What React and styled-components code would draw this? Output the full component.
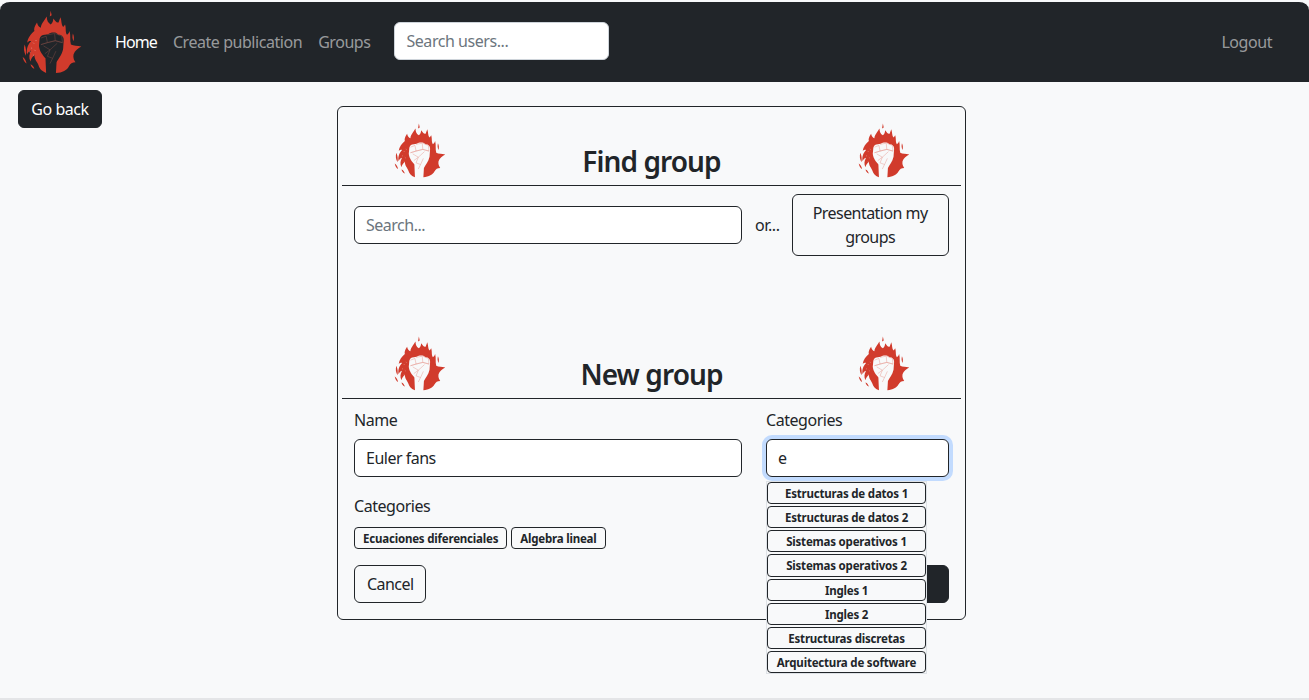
import React from "react";
import styled, { createGlobalStyle } from "styled-components";

const GlobalStyle = createGlobalStyle`
  * { box-sizing: border-box; }
  html, body { margin: 0; height: 100%; overflow: hidden; }
  body {
    background: #e4e5e7;
    color: #212529;
    font-family: "Noto Sans", "Open Sans", sans-serif;
    font-size: 16px;
    line-height: 24px;
  }
`;

const FLAMES =
  "M108 205C96 200 88 194 84 180C80 170 72 164 72 150C66 156 62 160 60 170C54 158 56 146 62 136C56 138 52 142 50 148C46 134 52 118 62 108C58 106 54 108 50 112C52 96 62 84 72 76C70 70 72 62 80 50C82 60 86 64 92 66C92 56 100 48 110 32C110 44 114 52 122 56C128 52 130 44 130 38C136 46 140 52 146 50C148 44 150 40 152 34C156 46 154 56 160 64C162 62 164 60 166 56C170 70 166 78 172 88C176 84 178 82 180 76C184 92 180 104 184 118C192 122 204 122 216 124C206 130 196 136 192 148C190 158 194 166 198 172C188 172 182 176 178 184C172 196 158 204 138 205L140 172C146 160 156 150 160 132L162 104C162 94 156 88 146 88L138 82C128 80 120 82 114 86L104 88C96 88 90 92 88 100L86 122C88 140 98 150 106 160Z" +
  "M122 14L125 28L119 32ZM42 118C38 130 40 142 46 152C48 140 46 128 42 118ZM36 156C42 160 46 166 48 176C42 172 38 166 36 156ZM60 178C66 180 70 186 72 192C66 190 62 186 60 178ZM190 84C194 92 194 100 192 108C188 100 188 92 190 84Z";

function FistLogo({ width, height, lines }) {
  return (
    <svg width={width} height={height} viewBox="34 12 184 196">
      <path d={FLAMES} fill="#d13b2c" />
      <path
        d="M92 98L108 92L112 112L92 118M112 88L134 84L136 106L112 112M136 84L156 92L158 112L136 106M92 118L112 112L136 106L158 112M100 122L120 134L142 114M120 134L112 154L128 160L138 138M104 146L120 134M128 160L120 176"
        fill="none"
        stroke={lines}
        strokeWidth="2"
        opacity="0.75"
      />
      <path
        d="M62 128l3 2M68 112l3 3M56 140l4 1M72 134l3 3M68 150l3 1M76 104l2 3"
        fill="none"
        stroke="#e8a49b"
        strokeWidth="2"
      />
    </svg>
  );
}

const Page = styled.div`
  width: 1309px;
  height: 698px;
  background: #f8f9fa;
  overflow: hidden;
`;

const Navbar = styled.nav`
  height: 82px;
  background: #212529;
  display: flex;
  align-items: center;
  padding: 0 37px 0 22px;
  border-top: 2px solid #f8f9fa;
  border-radius: 10px 10px 0 0;
`;

const NavLinks = styled.div`
  display: flex;
  align-items: center;
  margin-left: 33px;
  gap: 16px;
`;

const NavLink = styled.a`
  color: ${(p) => (p.$active ? "#fff" : "rgba(255,255,255,.55)")};
  letter-spacing: ${(p) => (p.$active ? "-0.9px" : "-0.45px")};
`;

const NavSearch = styled.input`
  width: 215px;
  height: 38px;
  margin: 0 0 2px 8px;
  padding: 6px 12px 6px 11px;
  border: 1px solid #ced4da;
  border-radius: 6px;
  background: #fff;
  font: inherit;
  letter-spacing: -0.45px;
  &::placeholder { color: #6c757d; opacity: 1; }
`;

const Logout = styled(NavLink)`
  margin-left: auto;
`;

const Content = styled.div`
  display: flex;
  align-items: flex-start;
  padding: 8px 0 0 18px;
`;

const BackButton = styled.button`
  height: 38px;
  width: 84px;
  border: 1px solid #212529;
  border-radius: 6px;
  background: #212529;
  color: #fff;
  font: inherit;
  letter-spacing: -0.45px;
  padding: 0;
`;

const Card = styled.main`
  width: 629px;
  height: 514px;
  margin: 16px 0 0 235px;
  padding: 0 4px;
  border: 1px solid #212529;
  border-radius: 6px;
`;

const SectionHead = styled.header`
  height: ${(p) => p.$height}px;
  display: flex;
  align-items: flex-end;
  justify-content: space-between;
  padding: 0 51px 7px 52px;
  border-bottom: 1px solid #212529;
  position: relative;
`;

const Title = styled.h2`
  margin: 0;
  font-size: 28px;
  line-height: 34px;
  font-weight: 600;
  letter-spacing: -0.9px;
  position: absolute;
  left: 0;
  right: 0;
  bottom: 7px;
  text-align: center;
`;

const FindRow = styled.div`
  display: flex;
  align-items: center;
  height: 70px;
  padding: 8px 12px 0;
`;

const Input = styled.input`
  display: block;
  width: ${(p) => p.$width}px;
  height: 38px;
  padding: 6px 12px 6px 11px;
  border: 1px solid #212529;
  border-radius: 6px;
  background: #fff;
  color: #212529;
  font: inherit;
  letter-spacing: -0.5px;
  outline: none;
  box-shadow: ${(p) => (p.$focused ? "0 0 0 4px #c2dbfe" : "none")};
  &::placeholder { color: #6c757d; opacity: 1; }
`;

const OrText = styled.span`
  margin: 0 12px 0 13px;
  letter-spacing: -0.4px;
`;

const OutlineButton = styled.button`
  width: ${(p) => p.$width}px;
  height: ${(p) => p.$height}px;
  padding: 6px 12px;
  border: 1px solid #212529;
  border-radius: 6px;
  background: transparent;
  color: #212529;
  font: inherit;
  letter-spacing: -0.55px;
`;

const FormGrid = styled.div`
  display: grid;
  grid-template-columns: 388px 183px;
  column-gap: 24px;
  padding: 9px 12px 0;
`;

const Label = styled.div`
  height: 24px;
  margin-bottom: 7px;
  letter-spacing: -0.45px;
`;

const Column = styled.div`
  position: relative;
  display: flex;
  flex-direction: column;
`;

const SavedLabel = styled(Label)`
  margin: 17px 0 9px;
`;

const Chips = styled.div`
  display: flex;
  gap: 4px;
  margin-bottom: 16px;
`;

const Chip = styled.span`
  display: inline-block;
  height: 22px;
  padding: 1px 8px 0;
  border: 1px solid #212529;
  border-radius: 4px;
  font-size: 11.5px;
  font-weight: 700;
  line-height: 20px;
  letter-spacing: -0.2px;
  white-space: nowrap;
`;

const Suggestions = styled.div`
  position: absolute;
  left: 0;
  top: 73px;
  width: 161px;
  display: flex;
  flex-direction: column;
  gap: 2px;
  border: 1px solid #dee2e6;
  background: #f8f9fa;
  z-index: 2;
`;

const Suggestion = styled(Chip)`
  display: block;
  height: 22.15px;
  padding: 1px 0 0;
  text-align: center;
  background: #f8f9fa;
`;

const SubmitButton = styled.button`
  width: 60px;
  height: 38px;
  margin: 88px 0 0 auto;
  border: 1px solid #212529;
  border-radius: 6px;
  background: #212529;
`;

const SUGGESTIONS = [
  "Estructuras de datos 1",
  "Estructuras de datos 2",
  "Sistemas operativos 1",
  "Sistemas operativos 2",
  "Ingles 1",
  "Ingles 2",
  "Estructuras discretas",
  "Arquitectura de software",
];

export default function App() {
  return (
    <Page>
      <GlobalStyle />
      <Navbar>
        <FistLogo width={60} height={64} lines="#7d4a45" />
        <NavLinks>
          <NavLink $active>Home</NavLink>
          <NavLink>Create publication</NavLink>
          <NavLink>Groups</NavLink>
          <NavSearch placeholder="Search users..." />
        </NavLinks>
        <Logout>Logout</Logout>
      </Navbar>
      <Content>
        <BackButton>Go back</BackButton>
        <Card>
          <SectionHead $height={79}>
            <FistLogo width={52} height={55} lines="#e58f85" />
            <Title>Find group</Title>
            <FistLogo width={52} height={55} lines="#e58f85" />
          </SectionHead>
          <FindRow>
            <Input $width={388} placeholder="Search..." />
            <OrText>or...</OrText>
            <OutlineButton $width={157} $height={62}>Presentation my groups</OutlineButton>
          </FindRow>
          <SectionHead $height={143}>
            <FistLogo width={52} height={55} lines="#e58f85" />
            <Title>New group</Title>
            <FistLogo width={52} height={55} lines="#e58f85" />
          </SectionHead>
          <FormGrid>
            <Column>
              <Label>Name</Label>
              <Input $width={388} defaultValue="Euler fans" />
              <SavedLabel>Categories</SavedLabel>
              <Chips>
                <Chip>Ecuaciones diferenciales</Chip>
                <Chip>Algebra lineal</Chip>
              </Chips>
              <OutlineButton $width={72} $height={38}>Cancel</OutlineButton>
            </Column>
            <Column>
              <Label>Categories</Label>
              <Input $width={183} $focused defaultValue="e" />
              <SubmitButton />
              <Suggestions>
                {SUGGESTIONS.map((name) => (
                  <Suggestion key={name}>{name}</Suggestion>
                ))}
              </Suggestions>
            </Column>
          </FormGrid>
        </Card>
      </Content>
    </Page>
  );
}
